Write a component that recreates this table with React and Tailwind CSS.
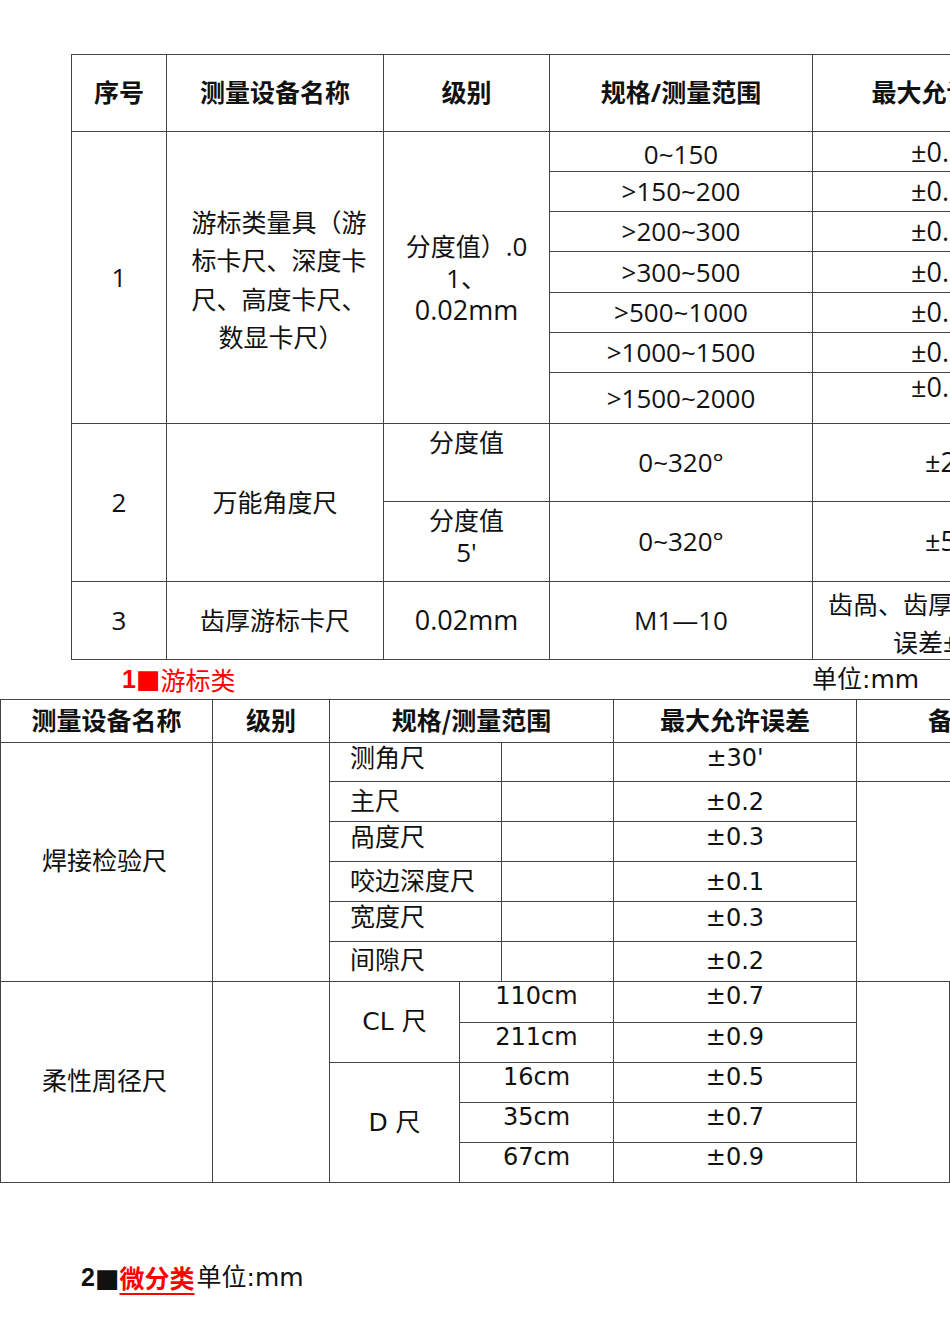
import React from "react";

function C({ className = "", children }) {
  return (
    <div className={"border-r border-b border-[#444] flex " + className}>
      {children}
    </div>
  );
}

const specs = [">150~200", ">200~300", ">300~500", ">500~1000", ">1000~1500"];
const maxes = ["±0.03", "±0.03", "±0.04", "±0.05", "±0.07"];

function TopTable() {
  return (
    <div className="ml-[71px] grid w-max grid-cols-[95px_217px_166px_263px_262px] grid-rows-[77px_40px_40px_40px_41px_40px_40px_51px_78px_80px_78px] border-t border-l border-[#444] text-[#111] font-['Open_Sans','Noto_Sans_CJK_SC',sans-serif]">
      {/* header */}
      <C className="items-center justify-center text-[25px] font-bold">序号</C>
      <C className="items-center justify-center text-[25px] font-bold">测量设备名称</C>
      <C className="items-center justify-center text-[25px] font-bold">级别</C>
      <C className="items-center justify-center text-[25px] font-bold">规格/测量范围</C>
      <C className="items-center justify-center pl-[6px] text-[25px] font-bold">最大允许误差</C>

      {/* group 1 */}
      <C className="row-span-7 items-center justify-center text-[26px]">1</C>
      <C className="row-span-7 flex-col items-center justify-center pl-[8px] pt-[4px] text-[25px] leading-[38.5px]">
        <div>游标类量具（游</div>
        <div>标卡尺、深度卡</div>
        <div>尺、高度卡尺、</div>
        <div className="pl-[4px]">数显卡尺）</div>
      </C>
      <C className="row-span-7 flex-col items-center justify-center text-[26px] leading-[32px]">
        <div>
          <span className="text-[25px]">分度值）</span>.0
        </div>
        <div>1、</div>
        <div className="text-[27px]">0.02mm</div>
      </C>
      <C className="items-center justify-center pt-[6px] text-[26px]">0~150</C>
      <C className="items-center justify-center pl-[4px] pt-[2px] text-[27px]">±0.02</C>
      {specs.map((s, i) => (
        <React.Fragment key={s}>
          <C className="items-center justify-center text-[26px]">{s}</C>
          <C className="items-center justify-center pl-[4px] text-[27px]">{maxes[i]}</C>
        </React.Fragment>
      ))}
      <C className="items-center justify-center text-[26px]">&gt;1500~2000</C>
      <C className="items-start justify-center pl-[4px] text-[27px] leading-[28px]">±0.09</C>

      {/* group 2 */}
      <C className="row-span-2 items-center justify-center text-[26px]">2</C>
      <C className="row-span-2 items-center justify-center text-[25px]">万能角度尺</C>
      <C className="items-start justify-center pt-[2px] text-[25px] leading-[32px]">分度值</C>
      <C className="items-center justify-center text-[26px]">0~320°</C>
      <C className="items-center justify-center text-[27px]">±2'</C>
      <C className="flex-col items-center justify-start pt-[2px] leading-[32px]">
        <div className="text-[25px]">分度值</div>
        <div className="text-[26px]">5'</div>
      </C>
      <C className="items-center justify-center text-[26px]">0~320°</C>
      <C className="items-center justify-center text-[27px]">±5'</C>

      {/* group 3 */}
      <C className="items-center justify-center text-[26px]">3</C>
      <C className="items-center justify-center text-[25px]">齿厚游标卡尺</C>
      <C className="items-center justify-center text-[27px]">0.02mm</C>
      <C className="items-center justify-center text-[26px]">M1—10</C>
      <C className="flex-col justify-center pt-[4px] text-[25px] leading-[38px]">
        <div className="whitespace-nowrap pl-[15px]">齿咼、齿厚示值允许</div>
        <div className="whitespace-nowrap pl-[80px]">误差±0.03</div>
      </C>
    </div>
  );
}

function BottomTable() {
  return (
    <div className="grid w-max grid-cols-[212px_117px_130px_42px_112px_243px_93px_100px] grid-rows-[43px_39px_40px_40px_40px_40px_40px_41px_40px_40px_40px_40px] border-t border-l border-[#444] text-[#111] font-['DejaVu_Sans','Noto_Sans_CJK_SC',sans-serif]">
      {/* header */}
      <C className="items-center justify-center pb-[2px] font-['Noto_Sans_CJK_SC',sans-serif] text-[25px] font-bold">测量设备名称</C>
      <C className="items-center justify-center pb-[2px] font-['Noto_Sans_CJK_SC',sans-serif] text-[25px] font-bold">级别</C>
      <C className="col-span-3 items-center justify-center pb-[2px] font-['Noto_Sans_CJK_SC',sans-serif] text-[25px] font-bold">规格/测量范围</C>
      <C className="items-center justify-center pb-[2px] font-['Noto_Sans_CJK_SC',sans-serif] text-[25px] font-bold">最大允许误差</C>
      <C className="col-span-2 items-center justify-center pb-[2px] font-['Noto_Sans_CJK_SC',sans-serif] text-[25px] font-bold">备注</C>

      {/* section 1 */}
      <C className="row-span-6 items-center justify-center pr-[4px] text-[25px]">焊接检验尺</C>
      <C className="row-span-6"></C>
      <C className="col-span-2 items-start pl-[20px] pt-[1px] text-[25px] leading-[30px]">测角尺</C>
      <C></C>
      <C className="items-start justify-center pt-[0px] text-[24px] leading-[30px]">±30'</C>
      <C className="col-span-2"></C>

      <C className="col-span-2 items-start pl-[20px] pt-[5px] text-[25px] leading-[30px]">主尺</C>
      <C></C>
      <C className="items-start justify-center pt-[5px] text-[24px] leading-[30px]">±0.2</C>
      <C className="col-span-2 row-span-5"></C>

      <C className="col-span-2 items-start pl-[20px] pt-[1px] text-[25px] leading-[30px]">咼度尺</C>
      <C></C>
      <C className="items-start justify-center pt-[0px] text-[24px] leading-[30px]">±0.3</C>

      <C className="col-span-2 items-start pl-[20px] pt-[5px] text-[25px] leading-[30px]">咬边深度尺</C>
      <C></C>
      <C className="items-start justify-center pt-[5px] text-[24px] leading-[30px]">±0.1</C>

      <C className="col-span-2 items-start pl-[20px] pt-[1px] text-[25px] leading-[30px]">宽度尺</C>
      <C></C>
      <C className="items-start justify-center pt-[1px] text-[24px] leading-[30px]">±0.3</C>

      <C className="col-span-2 items-start pl-[20px] pt-[4px] text-[25px] leading-[30px]">间隙尺</C>
      <C></C>
      <C className="items-start justify-center pt-[4px] text-[24px] leading-[30px]">±0.2</C>

      {/* section 2 */}
      <C className="row-span-5 items-center justify-center pr-[4px] text-[25px]">柔性周径尺</C>
      <C className="row-span-5"></C>
      <C className="row-span-2 items-center justify-center text-[25px]">CL 尺</C>
      <C className="col-span-2 items-start justify-center text-[24px] leading-[28px]">110cm</C>
      <C className="items-start justify-center text-[24px] leading-[28px]">±0.7</C>
      <C className="row-span-5"></C>
      <C className="row-span-5"></C>

      <C className="col-span-2 items-start justify-center text-[24px] leading-[28px]">211cm</C>
      <C className="items-start justify-center text-[24px] leading-[28px]">±0.9</C>

      <C className="row-span-3 items-center justify-center text-[25px]">D 尺</C>
      <C className="col-span-2 items-start justify-center text-[24px] leading-[28px]">16cm</C>
      <C className="items-start justify-center text-[24px] leading-[28px]">±0.5</C>

      <C className="col-span-2 items-start justify-center text-[24px] leading-[28px]">35cm</C>
      <C className="items-start justify-center text-[24px] leading-[28px]">±0.7</C>

      <C className="col-span-2 items-start justify-center text-[24px] leading-[28px]">67cm</C>
      <C className="items-start justify-center text-[24px] leading-[28px]">±0.9</C>
    </div>
  );
}

export default function App() {
  return (
    <div className="h-[1344px] w-[950px] overflow-hidden bg-white pt-[54px] text-[#111]">
      <TopTable />

      <div className="flex h-[39px] items-center text-[25px] font-['DejaVu_Sans','Noto_Sans_CJK_SC',sans-serif]">
        <div className="flex w-[812px] items-center pl-[122px] text-[#f00]">
          <span className="font-['Liberation_Sans',sans-serif] font-bold">1</span>
          <span className="text-[26px]">■</span>
          <span className="font-['Noto_Sans_CJK_SC',sans-serif]">游标类</span>
        </div>
        <div>单位:mm</div>
      </div>

      <BottomTable />

      <div className="mt-[75px] flex h-[40px] items-center pl-[81px] text-[25px] font-['DejaVu_Sans','Noto_Sans_CJK_SC',sans-serif]">
        <span className="font-['Liberation_Sans',sans-serif] font-bold">2</span>
        <span className="text-[26px]">■</span>
        <span className="font-['Noto_Sans_CJK_SC',sans-serif] font-bold text-[#f00] underline decoration-[#f00] decoration-2 underline-offset-[5px]">微分类</span>
        <span className="pl-[2px]">单位:mm</span>
      </div>
    </div>
  );
}
